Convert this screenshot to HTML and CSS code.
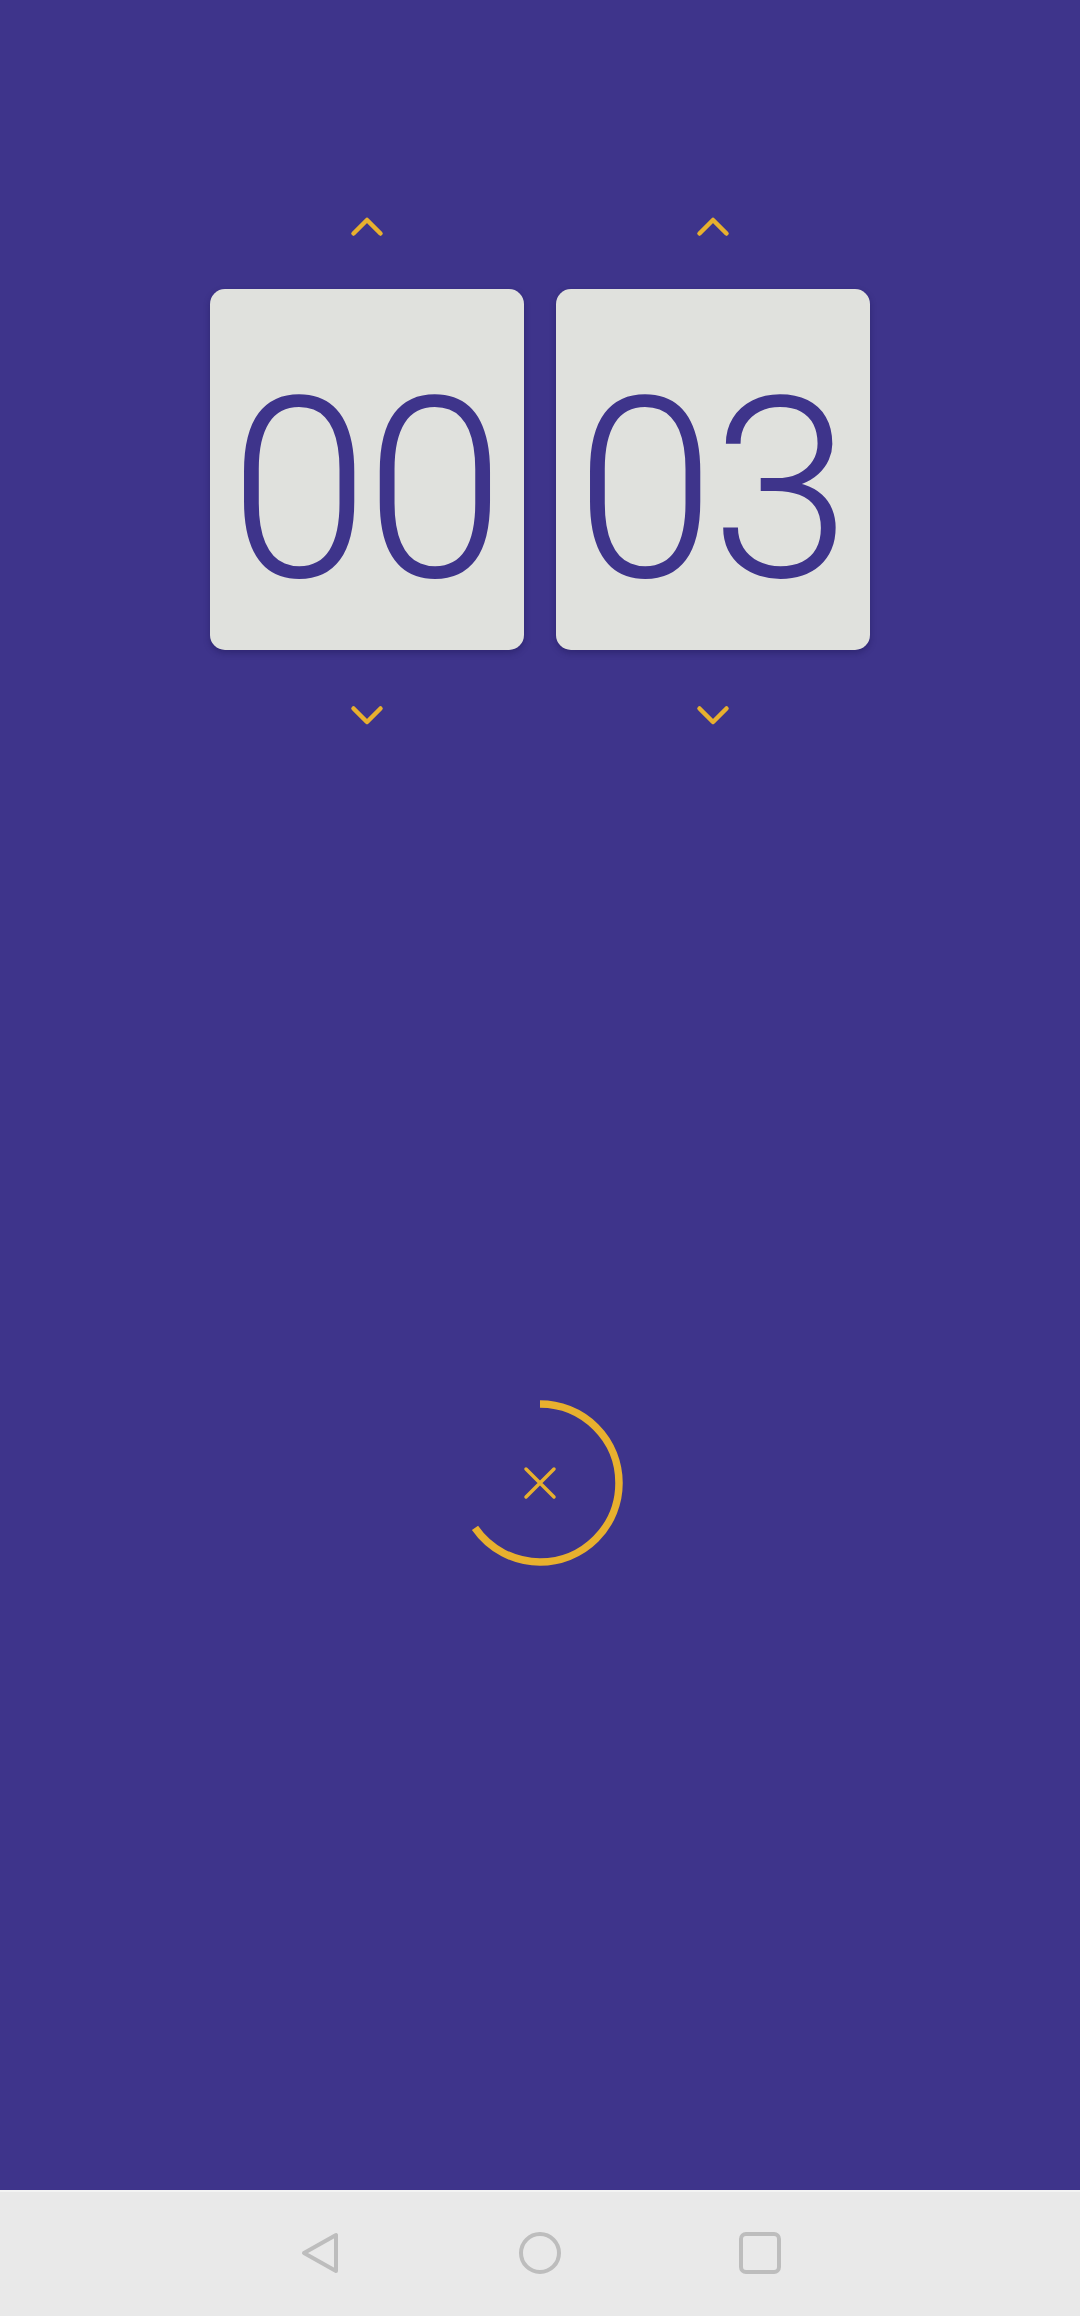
FILE: index.html
```html
<!DOCTYPE html>
<html>
<head>
<meta charset="utf-8">
<link rel="stylesheet" href="styles.css">
</head>
<body>
<div class="screen">
  <main class="main">
    <section class="timer">
      <div class="unit">
        <button class="arrow">
          <svg viewBox="0 0 48 48" width="48" height="48"><path d="M10.5 31.5 L24 18 L37.5 31.5" /></svg>
        </button>
        <div class="card"><span class="digits">00</span></div>
        <button class="arrow">
          <svg viewBox="0 0 48 48" width="48" height="48"><path d="M10.5 17.5 L24 31 L37.5 17.5" /></svg>
        </button>
      </div>
      <div class="unit">
        <button class="arrow">
          <svg viewBox="0 0 48 48" width="48" height="48"><path d="M10.5 31.5 L24 18 L37.5 31.5" /></svg>
        </button>
        <div class="card"><span class="digits">03</span></div>
        <button class="arrow">
          <svg viewBox="0 0 48 48" width="48" height="48"><path d="M10.5 17.5 L24 31 L37.5 17.5" /></svg>
        </button>
      </div>
    </section>
    <section class="progress">
      <svg class="spinner" viewBox="0 0 180 180" width="180" height="180">
        <circle class="ring" cx="90" cy="90" r="79" transform="rotate(-90 90 90)" />
        <path class="cross" d="M76 76 L104 104 M104 76 L76 104" />
      </svg>
    </section>
  </main>
  <nav class="navbar">
    <svg class="nav-icon" viewBox="0 0 48 48" width="48" height="48"><path d="M8 24 L40 6 L40 42 Z" /></svg>
    <svg class="nav-icon" viewBox="0 0 48 48" width="48" height="48"><circle cx="24" cy="24" r="19" /></svg>
    <svg class="nav-icon" viewBox="0 0 48 48" width="48" height="48"><rect x="5" y="5" width="38" height="38" rx="5" /></svg>
  </nav>
</div>
</body>
</html>
```

FILE: styles.css
```css
html, body {
  margin: 0;
  padding: 0;
}

body {
  width: 1080px;
  height: 2316px;
  background: #3e348b;
  font-family: Roboto, "Liberation Sans", sans-serif;
  overflow: hidden;
}

.screen {
  display: flex;
  flex-direction: column;
  height: 2316px;
}

.main {
  height: 2190px;
  background: #3e348b;
  display: flex;
  flex-direction: column;
  align-items: center;
}

.timer {
  display: flex;
  gap: 32px;
  padding-top: 202px;
}

.unit {
  width: 314px;
  display: flex;
  flex-direction: column;
  align-items: center;
}

.arrow {
  width: 48px;
  height: 48px;
  padding: 0;
  border: none;
  background: transparent;
  display: block;
}

.arrow svg {
  display: block;
  fill: none;
  stroke: #e8b02e;
  stroke-width: 4.5;
  stroke-linecap: round;
  stroke-linejoin: round;
}

.card {
  width: 314px;
  height: 361px;
  box-sizing: border-box;
  margin: 39px 0 41px;
  background: #e0e1dd;
  border-radius: 15px;
  box-shadow: 0 3px 6px rgba(20, 14, 70, 0.35);
  display: flex;
  align-items: center;
  justify-content: center;
  padding-top: 42px;
}

.digits {
  font-family: Roboto, "Liberation Sans", sans-serif;
  font-weight: 300;
  font-size: 252px;
  line-height: 1;
  letter-spacing: -4px;
  color: #3e348b;
  margin-left: -4px;
}

.progress {
  margin-top: 654px;
  display: flex;
  justify-content: center;
}

.spinner {
  display: block;
}

.ring {
  fill: none;
  stroke: #e8b02e;
  stroke-width: 7.5;
  stroke-dasharray: 324 1000;
}

.cross {
  fill: none;
  stroke: #e8b02e;
  stroke-width: 3.5;
  stroke-linecap: round;
}

.navbar {
  height: 126px;
  box-sizing: border-box;
  background: #e9e9e9;
  border-top: 2px solid #f3f3f3;
  display: flex;
  justify-content: center;
  align-items: center;
  gap: 172px;
  padding-bottom: 2px;
}

.nav-icon {
  display: block;
  fill: none;
  stroke: #bdbdbd;
  stroke-width: 4;
  stroke-linejoin: round;
}
```
